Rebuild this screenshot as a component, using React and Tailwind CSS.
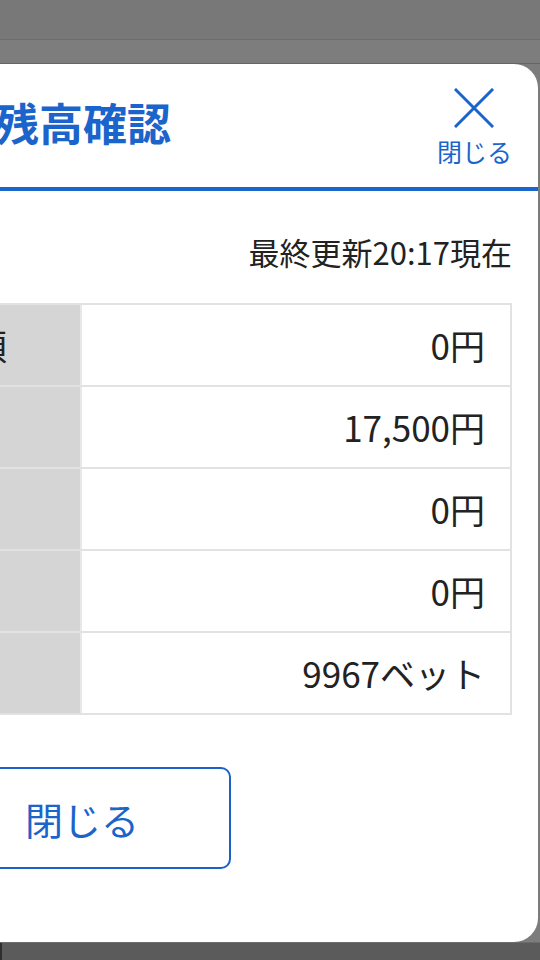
import React from "react";

const rows = [
  { label: "当日購入可能金額", value: "0円" },
  { label: "残高", value: "17,500円" },
  { label: "払戻金", value: "0円" },
  { label: "返還金", value: "0円" },
  { label: "ポイント", value: "9967ベット" },
];

export default function App() {
  return (
    <div className="w-[540px] h-[960px] overflow-hidden flex flex-col bg-[#7c7c7c] font-['Noto_Sans_CJK_JP','Noto_Sans',sans-serif]">
      <div className="h-[40px] shrink-0 bg-[#787878] border-b border-[#6c6c6c]" />
      <div className="h-[23px] shrink-0 bg-[#7d7d7d]" />
      <div className="h-[1px] shrink-0 bg-[#646464]" />
      <div className="ml-[-374px] w-[912px] h-[878px] shrink-0 bg-white rounded-[24px] flex flex-col px-[26px]">
        <div className="h-[127px] shrink-0 grid grid-cols-[1fr_auto_1fr] items-center border-b-4 border-[#1b66cc] mx-[-26px] px-[26px]">
          <div />
          <div className="text-[44px] leading-[44px] font-bold text-[#1a64cb] mb-[7px] ml-[2px]">残高確認</div>
          <div className="justify-self-end flex flex-col items-center text-[#1a64cb]">
            <svg width="40" height="40" viewBox="0 0 40 40" fill="none">
              <path d="M2 2 L38 38 M38 2 L2 38" stroke="#1a64cb" strokeWidth="3" strokeLinecap="square" />
            </svg>
            <div className="mt-[11px] text-[25px] leading-[25px]">閉じる</div>
          </div>
        </div>
        <div className="mt-[45px] text-right text-[31px] leading-[31px] text-[#222]">最終更新20:17現在</div>
        <div className="mt-[36px] border-2 border-[#e2e2e2] flex flex-col">
          {rows.map((r, i) => (
            <div
              key={i}
              className={`grid grid-cols-2 ${i < rows.length - 1 ? "h-[82px] border-b-2 border-[#e2e2e2]" : "h-[80px]"}`}
            >
              <div className="bg-[#d5d5d5] border-r-2 border-[#e8e8e8] flex items-center justify-center text-[35px] text-[#222] whitespace-nowrap">
                {r.label}
              </div>
              <div className="flex items-center justify-end pr-[25px] text-[35px] text-[#222] whitespace-nowrap">
                {r.value}
              </div>
            </div>
          ))}
        </div>
        <div className="mt-[52px] flex justify-center">
          <button className="w-[298px] h-[102px] border-2 border-[#1a62c8] rounded-[10px] text-[38px] text-[#1a64cb] bg-white flex items-center justify-center">
            閉じる
          </button>
        </div>
      </div>
      <div className="flex-1 bg-[#5b5b5b] border-t border-[#6c6c6c] flex">
        <div className="w-[2px] bg-[#2e2e2e]" />
      </div>
    </div>
  );
}
